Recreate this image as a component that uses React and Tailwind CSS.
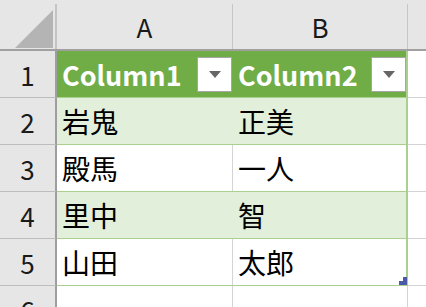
import React from 'react';

const FONT = { fontFamily: '"Noto Sans CJK JP", "Noto Sans", sans-serif' };

const data = [
  ['岩鬼', '正美'],
  ['殿馬', '一人'],
  ['里中', '智'],
  ['山田', '太郎'],
];

const FilterButton = () => (
  <div className="w-[35px] h-[35px] bg-white border border-[#a6a6a6] flex items-center justify-center shrink-0">
    <svg width="12" height="7" viewBox="0 0 12 7">
      <polygon points="0,0 12,0 6,7" fill="#666666" />
    </svg>
  </div>
);

const RowHead = ({ n }) => (
  <div className="w-[57px] h-[47px] shrink-0 bg-[#e6e6e6] border-r-2 border-b border-r-[#9e9e9e] border-b-[#bdbdbd] flex items-center justify-center text-[26px] text-[#1a1a1a]">
    {n}
  </div>
);

export default function App() {
  return (
    <div className="w-[426px] h-[307px] overflow-hidden bg-white select-none" style={FONT}>
      {/* column letters */}
      <div className="flex h-[51px] bg-[#e6e6e6] border-b-2 border-[#a0a0a0] pt-[4px]">
        <div className="w-[57px] shrink-0 border-r-2 border-[#c4c4c4] flex items-end justify-end pr-[2px] pb-[1px]">
          <svg width="38" height="38" viewBox="0 0 38 38">
            <polygon points="0,38 38,38 38,0" fill="#b4b4b4" />
          </svg>
        </div>
        <div className="w-[176px] shrink-0 border-r border-[#c6c6c6] flex items-center justify-center text-[26px] text-[#1a1a1a]">A</div>
        <div className="w-[175px] shrink-0 border-r border-[#c6c6c6] flex items-center justify-center text-[26px] text-[#1a1a1a]">B</div>
        <div className="flex-1" />
      </div>

      {/* table header row */}
      <div className="flex h-[47px]">
        <RowHead n="1" />
        <div className="w-[351px] shrink-0 flex bg-[#70ad47] border-b border-r-2 border-[#a9d08e]">
          <div className="w-[176px] shrink-0 flex items-center pl-[5px] pr-[1px]">
            <span className="flex-1 text-white font-bold text-[27px] leading-none">Column1</span>
            <FilterButton />
          </div>
          <div className="flex-1 flex items-center pl-[5px]">
            <span className="flex-1 text-white font-bold text-[27px] leading-none">Column2</span>
            <FilterButton />
          </div>
        </div>
        <div className="flex-1 border-b border-[#d4d4d4]" />
      </div>

      {data.map(([a, b], i) => {
        const band = i % 2 === 0;
        return (
          <div key={i} className="flex h-[47px]">
            <RowHead n={String(i + 2)} />
            <div className={`w-[351px] shrink-0 flex border-b border-r-2 border-[#a9d08e] ${band ? 'bg-[#e2efda]' : 'bg-white'}`}>
              <div className={`w-[176px] shrink-0 flex items-center pl-[5px] text-[28px] text-black ${band ? '' : 'border-r border-[#d4d4d4]'}`}>{a}</div>
              <div className="flex-1 flex items-center pl-[5px] text-[28px] text-black">
                {b}
              </div>
              {i === data.length - 1 && (
                <div className="self-end shrink-0 -mr-px">
                  <svg width="8" height="8" viewBox="0 0 8 8">
                    <polygon points="4,0 8,0 8,8 0,8 0,4 4,4" fill="#4a5aa8" />
                  </svg>
                </div>
              )}
            </div>
            <div className="flex-1 border-b border-[#d4d4d4]" />
          </div>
        );
      })}

      {/* row 6, cut by the window */}
      <div className="flex h-[47px]">
        <div className="w-[57px] h-[47px] shrink-0 bg-[#e6e6e6] border-r-2 border-[#9e9e9e] flex items-center justify-center text-[26px] text-[#1a1a1a]">6</div>
        <div className="w-[176px] shrink-0 border-r border-[#d4d4d4]" />
        <div className="w-[175px] shrink-0 border-r border-[#d4d4d4]" />
        <div className="flex-1" />
      </div>
    </div>
  );
}
